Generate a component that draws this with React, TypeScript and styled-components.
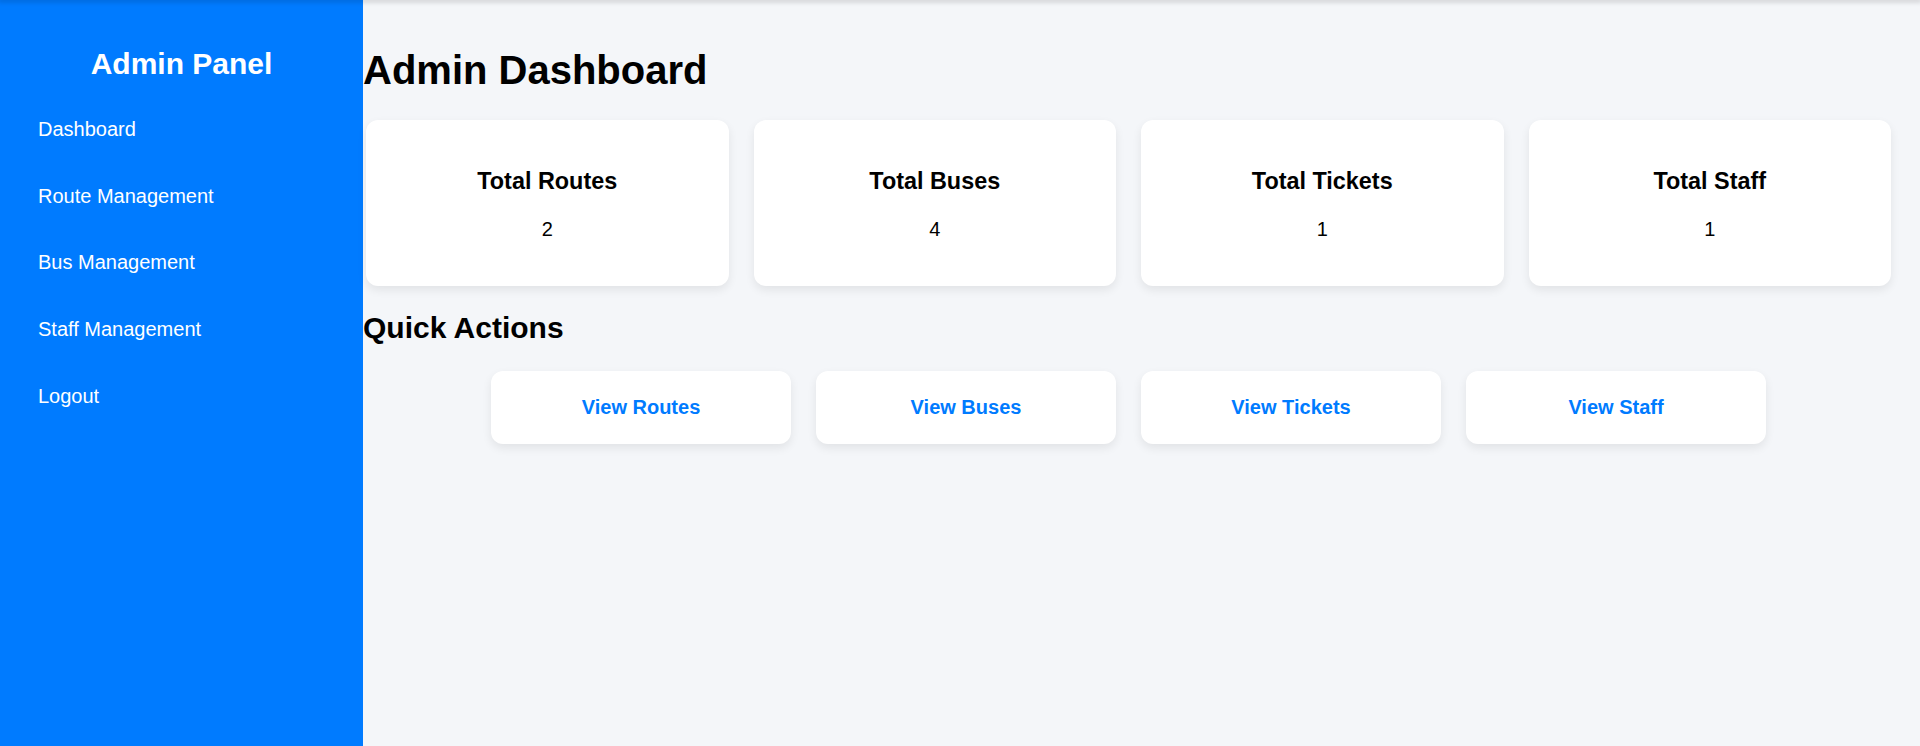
import React from "react";
import styled, { createGlobalStyle } from "styled-components";

const GlobalStyle = createGlobalStyle`
  html, body {
    margin: 0;
    padding: 0;
    font-family: "Liberation Sans", Arial, sans-serif;
    background: #f4f6f9;
    overflow: hidden;
  }
  * { box-sizing: border-box; }
`;

const Layout = styled.div`
  position: relative;
  display: flex;
  height: 746px;
  overflow: hidden;
`;

const TopShadow = styled.div`
  position: absolute;
  top: 0;
  left: 0;
  right: 0;
  height: 0;
  box-shadow: 0 0 5px 2px rgba(0, 0, 0, 0.18);
  z-index: 5;
`;

const Sidebar = styled.aside`
  width: 363px;
  flex-shrink: 0;
  background: #007bff;
  color: #fff;
  padding: 25px 0 0 0;
`;

const Brand = styled.h2`
  margin: 22px 0 15px;
  font-size: 30px;
  line-height: 34px;
  font-weight: 700;
  text-align: center;
`;

const NavList = styled.ul`
  list-style: none;
  margin: 0;
  padding: 0 0 0 38px;
`;

const NavItem = styled.li`
  height: 66.7px;
  display: flex;
  align-items: center;
  font-size: 20px;
  color: #fff;
  cursor: pointer;
`;

const Main = styled.main`
  flex: 1;
  padding: 20px 0 0 0;
  color: #000;
`;

const PageTitle = styled.h1`
  margin: 27px 0 27px;
  font-size: 40px;
  line-height: 46px;
  font-weight: 700;
`;

const StatsGrid = styled.div`
  display: grid;
  grid-template-columns: repeat(4, 1fr);
  gap: 25px;
  margin: 0 29px 0 3px;
`;

const StatCard = styled.div`
  background: #fff;
  border-radius: 12px;
  box-shadow: 0 4px 10px rgba(0, 0, 0, 0.08);
  height: 166px;
  padding-top: 2px;
  display: flex;
  flex-direction: column;
  align-items: center;
  justify-content: center;
`;

const StatTitle = styled.h3`
  margin: 0;
  font-size: 23.4px;
  line-height: 27px;
  font-weight: 700;
`;

const StatValue = styled.p`
  margin: 23px 0 0;
  font-size: 20px;
  line-height: 23px;
`;

const SectionTitle = styled.h2`
  margin: 25px 0 25px;
  font-size: 30px;
  line-height: 34.5px;
  font-weight: 700;
`;

const ActionsRow = styled.div`
  display: flex;
  justify-content: center;
  gap: 25px;
  margin: 0 29px 0 3px;
`;

const ActionButton = styled.button`
  width: 300px;
  height: 73px;
  border: none;
  background: #fff;
  border-radius: 12px;
  box-shadow: 0 4px 10px rgba(0, 0, 0, 0.08);
  color: #007bff;
  font-family: "Liberation Sans", Arial, sans-serif;
  font-size: 20px;
  font-weight: 700;
  cursor: pointer;
`;

const navItems = ["Dashboard", "Route Management", "Bus Management", "Staff Management", "Logout"];

const stats = [
  { title: "Total Routes", value: 2 },
  { title: "Total Buses", value: 4 },
  { title: "Total Tickets", value: 1 },
  { title: "Total Staff", value: 1 },
];

const actions = ["View Routes", "View Buses", "View Tickets", "View Staff"];

export default function App() {
  return (
    <>
      <GlobalStyle />
      <Layout>
        <TopShadow />
        <Sidebar>
          <Brand>Admin Panel</Brand>
          <NavList>
            {navItems.map((n) => (
              <NavItem key={n}>{n}</NavItem>
            ))}
          </NavList>
        </Sidebar>
        <Main>
          <PageTitle>Admin Dashboard</PageTitle>
          <StatsGrid>
            {stats.map((s) => (
              <StatCard key={s.title}>
                <StatTitle>{s.title}</StatTitle>
                <StatValue>{s.value}</StatValue>
              </StatCard>
            ))}
          </StatsGrid>
          <SectionTitle>Quick Actions</SectionTitle>
          <ActionsRow>
            {actions.map((a) => (
              <ActionButton key={a}>{a}</ActionButton>
            ))}
          </ActionsRow>
        </Main>
      </Layout>
    </>
  );
}
